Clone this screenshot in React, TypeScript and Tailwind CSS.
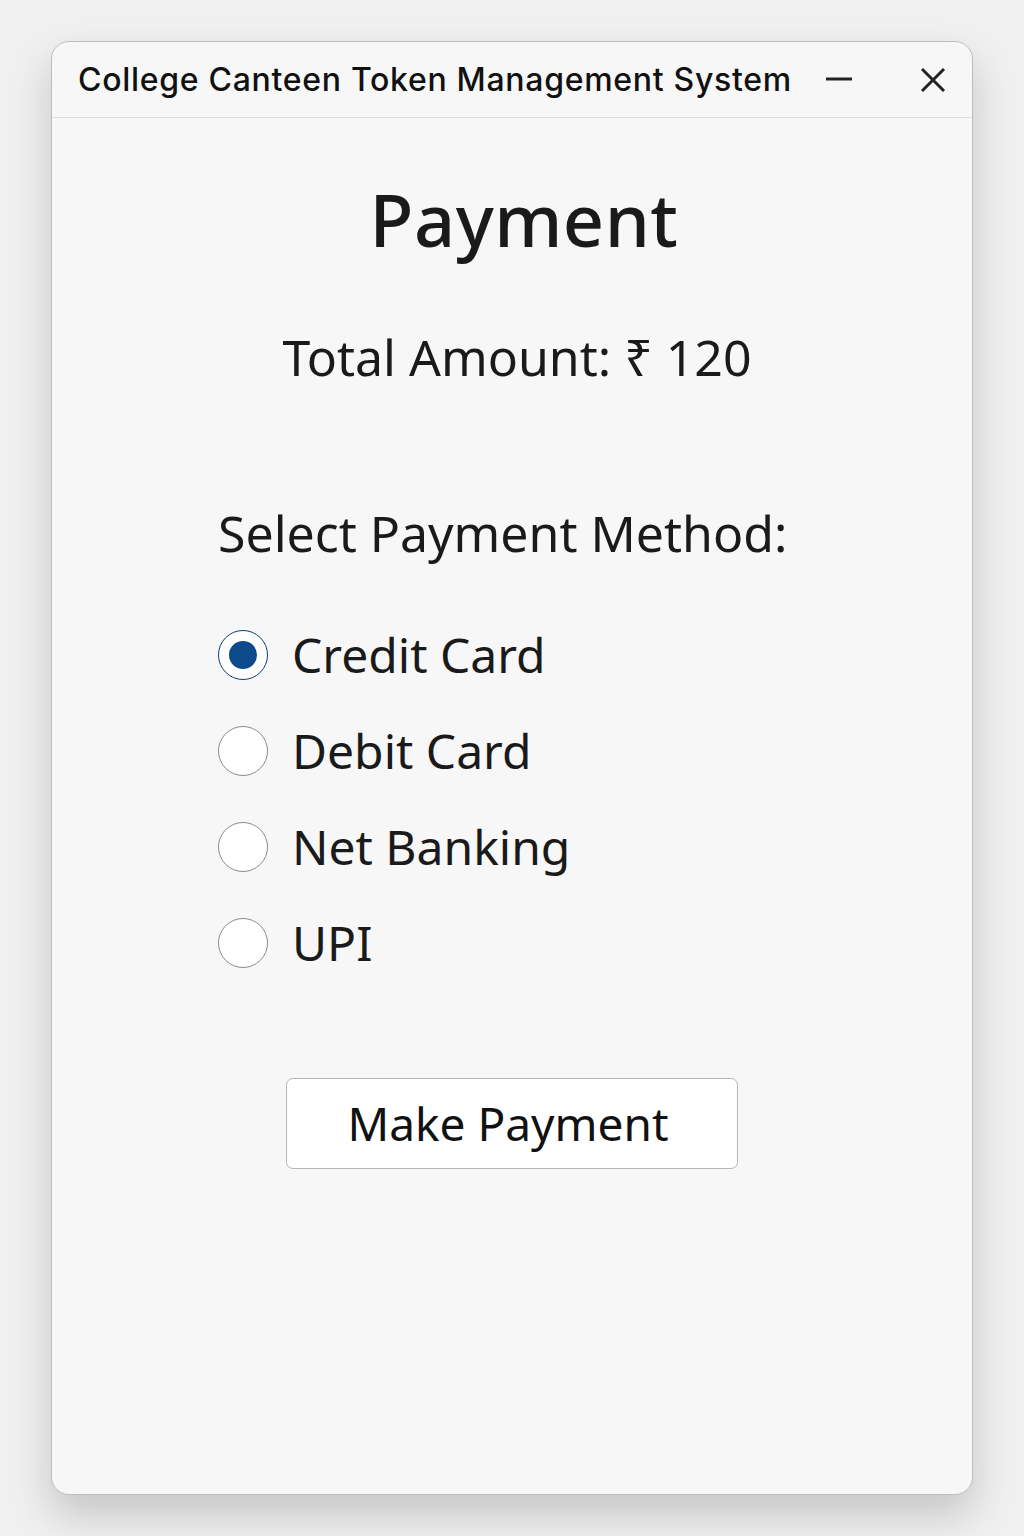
import React, { useState } from 'react';

const methods = ['Credit Card', 'Debit Card', 'Net Banking', 'UPI'];

function Radio({ checked }: { checked: boolean }) {
  return (
    <span
      className={
        'flex h-[50px] w-[50px] shrink-0 items-center justify-center rounded-full bg-white border ' +
        (checked ? 'border-[#0b3a78]' : 'border-[#8a8a8a]')
      }
    >
      {checked && <span className="h-[28px] w-[28px] rounded-full bg-[#0d4a8c]" />}
    </span>
  );
}

export default function App() {
  const [method, setMethod] = useState('Credit Card');

  return (
    <div className="min-h-[1536px] w-full bg-[#f0f0f0] pt-[41px] px-[51px] font-['Noto_Sans',sans-serif] text-[#1a1a1a]">
      <div className="flex h-[1454px] flex-col rounded-[18px] border border-[#bdbdbd] bg-[#f7f7f7] shadow-[0_20px_40px_rgba(0,0,0,0.18)]">
        <div className="flex h-[76px] items-center border-b border-[#dcdcdc] pl-[26px] pr-[26px]">
          <span className="font-['Inter',sans-serif] text-[32px] font-medium tracking-[0.7px] text-[#111]">
            College Canteen Token Management System
          </span>
          <div className="ml-auto flex items-center gap-[68px]">
            <svg width="26" height="26" viewBox="0 0 26 26">
              <path d="M0 12 H26" stroke="#222" strokeWidth="3" />
            </svg>
            <svg width="26" height="26" viewBox="0 0 26 26">
              <path d="M2 2 L24 24 M24 2 L2 24" stroke="#222" strokeWidth="3" />
            </svg>
          </div>
        </div>

        <div className="flex flex-col items-center">
          <h1 className="mt-[56px] pl-[24px] text-[72px] font-medium leading-[90px] tracking-[0.5px]">Payment</h1>
          <p className="mt-[63px] pl-[10px] text-[50px] leading-[60px]">Total Amount: ₹ 120</p>

          <div className="mt-[116px] flex w-full flex-col pl-[166px]">
            <p className="text-[50px] leading-[60px]">Select Payment Method:</p>
            <div className="mt-[67px] flex flex-col gap-[46px]">
              {methods.map((m) => (
                <label
                  key={m}
                  className="flex h-[50px] cursor-pointer items-center gap-[24px]"
                  onClick={() => setMethod(m)}
                >
                  <Radio checked={method === m} />
                  <span className="text-[48px] leading-[50px]">{m}</span>
                </label>
              ))}
            </div>
          </div>

          <button className="mt-[110px] h-[91px] w-[452px] rounded-[7px] border border-[#b5b5b5] bg-white pr-[8px] text-[46px] text-[#111]">
            Make Payment
          </button>
        </div>
      </div>
    </div>
  );
}
